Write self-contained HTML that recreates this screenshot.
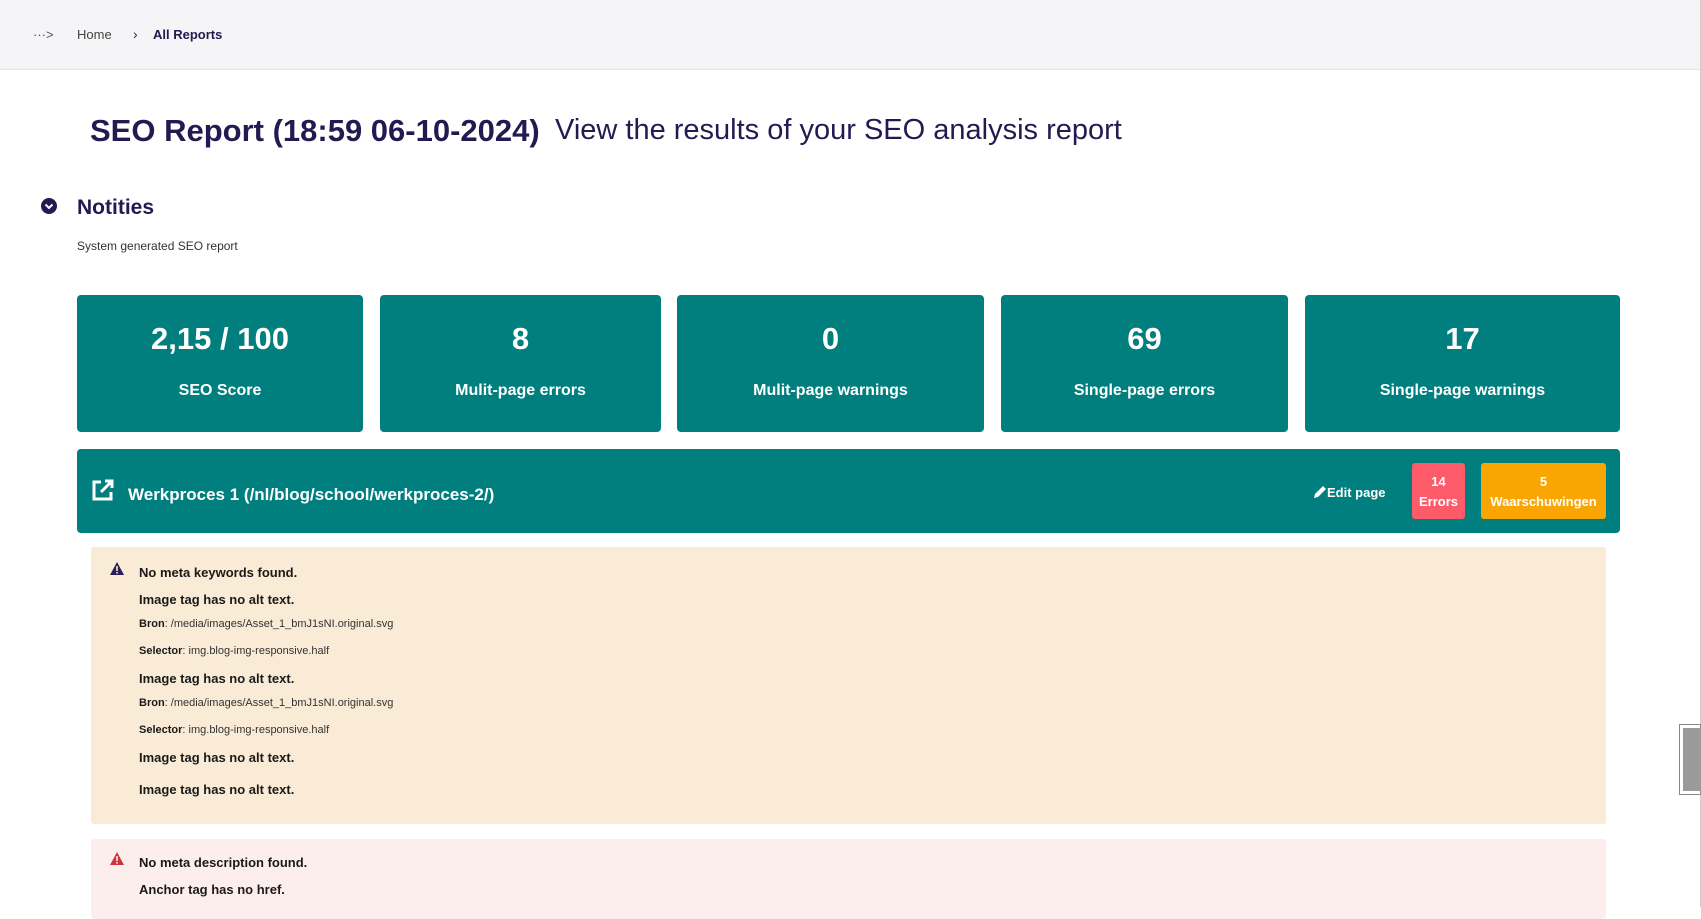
<!DOCTYPE html>
<html><head><meta charset="utf-8"><style>
*{margin:0;padding:0;box-sizing:border-box}
body{width:1701px;height:907px;overflow:hidden;background:#fff;font-family:"Liberation Sans",sans-serif;position:relative;color:#1f1a4f}
.hdr{position:absolute;left:0;top:0;width:1701px;height:70px;background:#f5f5f7;border-bottom:1px solid #e3e3e6}
.abs{position:absolute;white-space:nowrap}
.card{position:absolute;top:295px;height:137px;background:#017f7f;border-radius:4px;color:#fff;text-align:center}
.card .n{position:absolute;left:0;right:0;top:26px;font-size:31px;font-weight:bold}
.card .l{position:absolute;left:0;right:0;top:87px;font-size:16px;font-weight:bold}
.b{font-weight:bold;font-size:13px;color:#1a1a1a}
.s{font-size:11px;color:#333}
.s b{color:#1a1a1a}
</style></head><body>
<div class="hdr"></div>
<div class="abs" style="left:33px;top:27px;font-size:13px;color:#555">···&gt;</div>
<div class="abs" style="left:77px;top:27px;font-size:13px;color:#444">Home</div>
<div class="abs" style="left:133px;top:26px;font-size:14px;color:#333">›</div>
<div class="abs" style="left:153px;top:27px;font-size:13px;font-weight:bold;color:#1f1a4f">All Reports</div>

<div class="abs" style="left:90px;top:113px;font-size:31px;font-weight:bold;color:#231a52">SEO Report (18:59 06-10-2024)</div>
<div class="abs" style="left:555px;top:114px;font-size:29px;color:#231a52">View the results of your SEO analysis report</div>

<div class="abs" style="left:41px;top:198px;width:16px;height:16px;border-radius:50%;background:#231a52"></div>
<svg class="abs" style="left:41px;top:198px" width="16" height="16"><path d="M4.5 6.5 L8 10 L11.5 6.5" stroke="#fff" stroke-width="2" fill="none"/></svg>
<div class="abs" style="left:77px;top:196px;font-size:21px;font-weight:bold;color:#231a52">Notities</div>
<div class="abs" style="left:77px;top:239px;font-size:12px;color:#333">System generated SEO report</div>

<div class="card" style="left:77px;width:286px"><div class="n">2,15 / 100</div><div class="l">SEO Score</div></div>
<div class="card" style="left:380px;width:281px"><div class="n">8</div><div class="l">Mulit-page errors</div></div>
<div class="card" style="left:677px;width:307px"><div class="n">0</div><div class="l">Mulit-page warnings</div></div>
<div class="card" style="left:1001px;width:287px"><div class="n">69</div><div class="l">Single-page errors</div></div>
<div class="card" style="left:1305px;width:315px"><div class="n">17</div><div class="l">Single-page warnings</div></div>

<div class="abs" style="left:77px;top:449px;width:1543px;height:84px;background:#017f7f;border-radius:4px"></div>
<svg class="abs" style="left:91px;top:478px" width="24" height="24" viewBox="0 0 24 24"><path d="M10 4H3v17h17v-7" stroke="#fff" stroke-width="3" fill="none"/><path d="M10 14L21 3M14 3h7v7" stroke="#fff" stroke-width="3" fill="none"/></svg>
<div class="abs" style="left:128px;top:485px;font-size:17px;font-weight:bold;color:#fff">Werkproces 1 (/nl/blog/school/werkproces-2/)</div>
<svg class="abs" style="left:1313px;top:485px" width="14" height="14" viewBox="0 0 14 14"><path d="M1 13l1-4 8-8 3 3-8 8z" fill="#fff"/></svg>
<div class="abs" style="left:1327px;top:485px;font-size:13px;font-weight:bold;color:#fff">Edit page</div>
<div class="abs" style="left:1412px;top:463px;width:53px;height:56px;background:#fd5a6a;border-radius:3px;color:#fff;font-size:13px;font-weight:bold;text-align:center;line-height:20px;padding-top:9px">14<br>Errors</div>
<div class="abs" style="left:1481px;top:463px;width:125px;height:56px;background:#f9a602;border-radius:3px;color:#fff;font-size:13px;font-weight:bold;text-align:center;line-height:20px;padding-top:9px">5<br>Waarschuwingen</div>

<div class="abs" style="left:91px;top:547px;width:1515px;height:277px;background:#f9ebd6;border-radius:3px"></div>
<svg class="abs" style="left:110px;top:562px" width="14" height="13" viewBox="0 0 14 13"><path d="M7 0L14 13H0z" fill="#2a1f5c"/><rect x="6.2" y="4" width="1.6" height="5" fill="#f9ebd6"/><rect x="6.2" y="10" width="1.6" height="1.6" fill="#f9ebd6"/></svg>
<div class="abs b" style="left:139px;top:565px">No meta keywords found.</div>
<div class="abs b" style="left:139px;top:592px">Image tag has no alt text.</div>
<div class="abs s" style="left:139px;top:618px"><b>Bron</b>: /media/images/Asset_1_bmJ1sNI.original.svg</div>
<div class="abs s" style="left:139px;top:645px"><b>Selector</b>: img.blog-img-responsive.half</div>
<div class="abs b" style="left:139px;top:671px">Image tag has no alt text.</div>
<div class="abs s" style="left:139px;top:697px"><b>Bron</b>: /media/images/Asset_1_bmJ1sNI.original.svg</div>
<div class="abs s" style="left:139px;top:724px"><b>Selector</b>: img.blog-img-responsive.half</div>
<div class="abs b" style="left:139px;top:750px">Image tag has no alt text.</div>
<div class="abs b" style="left:139px;top:782px">Image tag has no alt text.</div>

<div class="abs" style="left:91px;top:839px;width:1515px;height:80px;background:#fdeeee;border-radius:3px"></div>
<svg class="abs" style="left:110px;top:852px" width="14" height="13" viewBox="0 0 14 13"><path d="M7 0L14 13H0z" fill="#d0343a"/><rect x="6.2" y="4" width="1.6" height="5" fill="#fdeeee"/><rect x="6.2" y="10" width="1.6" height="1.6" fill="#fdeeee"/></svg>
<div class="abs b" style="left:139px;top:855px">No meta description found.</div>
<div class="abs b" style="left:139px;top:882px">Anchor tag has no href.</div>

<div class="abs" style="left:1700px;top:0;width:1px;height:907px;background:#ccc"></div>
<div class="abs" style="left:1679px;top:724px;width:22px;height:71px;border:1px solid #888;background:#fff"></div>
<div class="abs" style="left:1683px;top:728px;width:18px;height:63px;background:#9a9a9a"></div>
</body></html>
